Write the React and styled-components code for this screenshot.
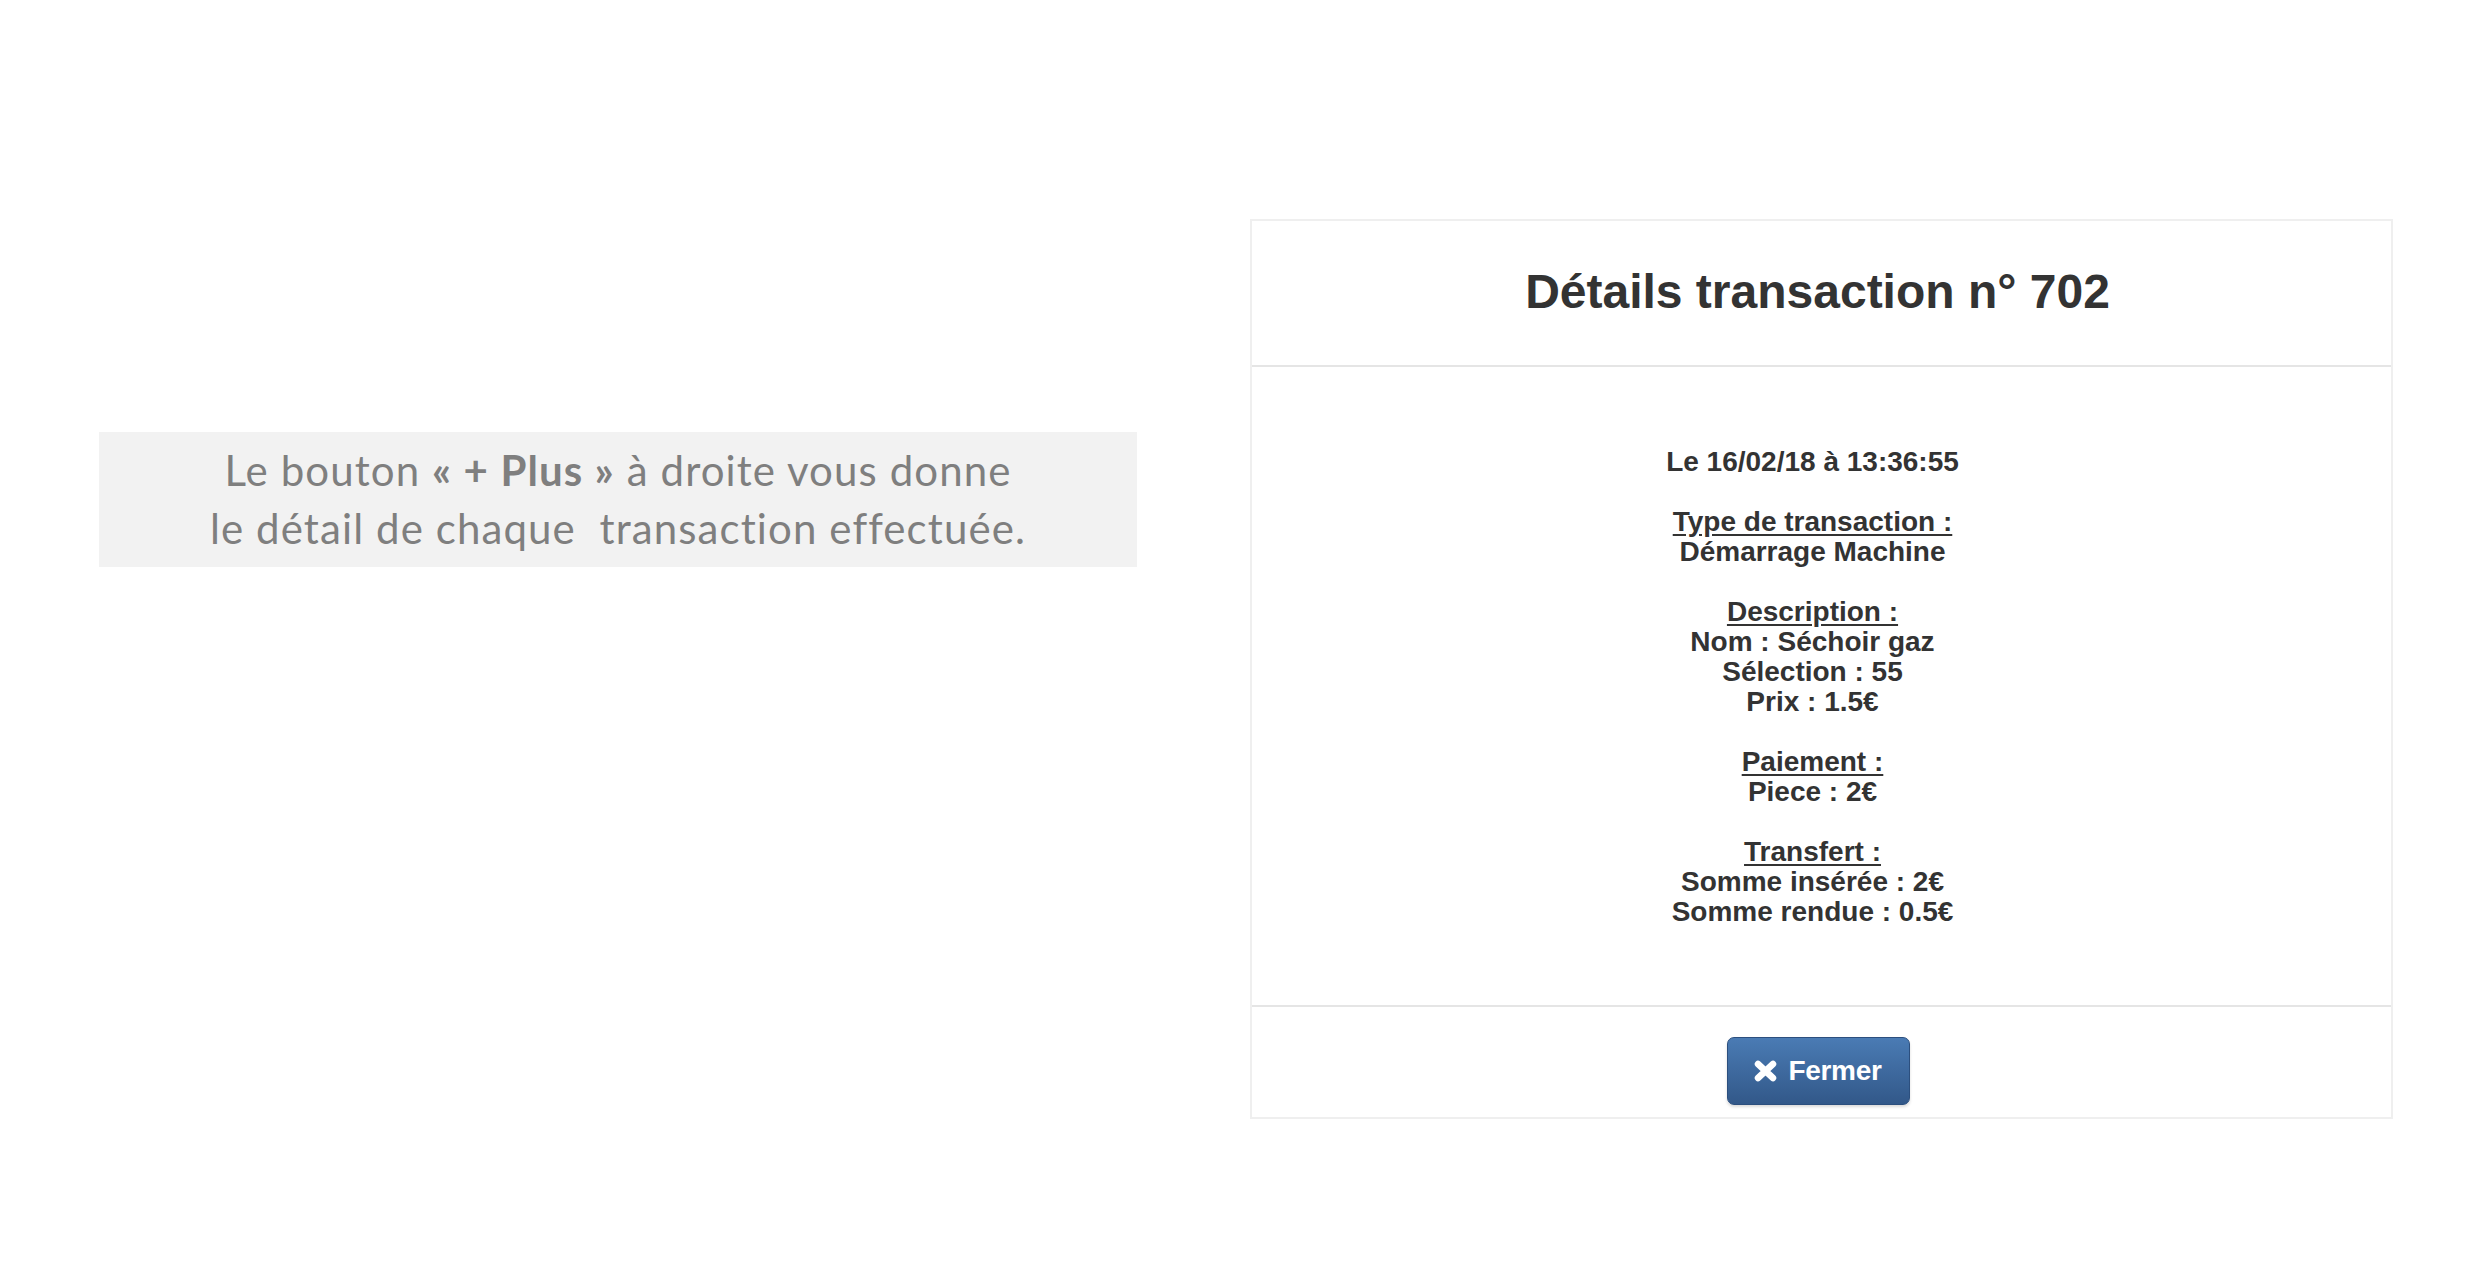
import React from "react";
import styled, { createGlobalStyle } from "styled-components";

const GlobalStyle = createGlobalStyle`
    html, body { margin: 0; padding: 0; background: #fff; }
    body { font-family: "Liberation Sans", Arial, sans-serif; }
`;

const Page = styled.div`
    width: 2472px;
    height: 1262px;
    display: flex;
    align-items: flex-start;
    padding-left: 99px;
    box-sizing: border-box;
`;

const Note = styled.div`
    width: 1038px;
    margin-top: 432px;
    padding: 9px 0 10px;
    box-sizing: border-box;
    background: #f2f2f2;
    color: #7f7f7f;
    font-family: Lato, "Open Sans", sans-serif;
    font-size: 42px;
    letter-spacing: 1.1px;
    line-height: 58px;
    text-align: center;
    white-space: pre;
    b { font-weight: 700; }
`;

const Modal = styled.div`
    width: 1143px;
    margin-top: 219px;
    margin-left: 113px;
    border: 2px solid #efefef;
    box-sizing: border-box;
    background: #fff;
    color: #333;
`;

const Header = styled.div`
    height: 144px;
    padding-right: 8px;
    display: flex;
    align-items: center;
    justify-content: center;
    border-bottom: 2px solid #e5e5e5;
`;

const Title = styled.h3`
    margin: 0 0 3px;
    font-size: 48px;
    font-weight: 700;
`;

const Body = styled.div`
    padding: 80px 18px 78px 0;
    text-align: center;
    font-size: 28px;
    font-weight: 700;
    line-height: 30px;
    border-bottom: 2px solid #e5e5e5;
`;

const Group = styled.div`
    margin-bottom: ${(p) => (p.last ? "0" : "30px")};
`;

const Label = styled.div`
    text-decoration: underline;
    text-underline-offset: 3px;
`;

const Footer = styled.div`
    height: 110px;
    padding: 30px 6px 0 0;
    box-sizing: border-box;
    display: flex;
    justify-content: center;
`;

const CloseButton = styled.button`
    width: 183px;
    height: 68px;
    display: flex;
    align-items: center;
    justify-content: center;
    gap: 10px;
    padding: 0 2px 0 0;
    border: 1px solid #2c4f7e;
    border-radius: 7px;
    background: linear-gradient(#4a7bb4, #325889);
    box-shadow: 0 2px 3px rgba(0, 0, 0, 0.15);
    color: #fff;
    font-family: "Liberation Sans", Arial, sans-serif;
    font-size: 28px;
    font-weight: 700;
    letter-spacing: -0.3px;
    cursor: pointer;
`;

// icône "remove" façon Font Awesome 3
const RemoveIcon = () => (
    <svg width="25" height="22" viewBox="0 0 25 22">
        <path d="M5 4 L20 18 M20 4 L5 18" stroke="#fff" strokeWidth="6.5" strokeLinecap="round" />
    </svg>
);

const details = [
    { lines: ["Le 16/02/18 à 13:36:55"] },
    { label: "Type de transaction :", lines: ["Démarrage Machine"] },
    { label: "Description :", lines: ["Nom : Séchoir gaz", "Sélection : 55", "Prix : 1.5€"] },
    { label: "Paiement :", lines: ["Piece : 2€"] },
    { label: "Transfert :", lines: ["Somme insérée : 2€", "Somme rendue : 0.5€"] },
];

const App = () => {
    return (
        <Page>
            <GlobalStyle />
            <Note>
                Le bouton <b>« + Plus »</b> à droite vous donne
                <br />
                le détail de chaque  transaction effectuée.
            </Note>
            <Modal>
                <Header>
                    <Title>Détails transaction n° 702</Title>
                </Header>
                <Body>
                    {details.map((g, i) => (
                        <Group key={i} last={i === details.length - 1}>
                            {g.label && <Label>{g.label}</Label>}
                            {g.lines.map((l) => (
                                <div key={l}>{l}</div>
                            ))}
                        </Group>
                    ))}
                </Body>
                <Footer>
                    <CloseButton>
                        <RemoveIcon />
                        Fermer
                    </CloseButton>
                </Footer>
            </Modal>
        </Page>
    );
};

export default App;
